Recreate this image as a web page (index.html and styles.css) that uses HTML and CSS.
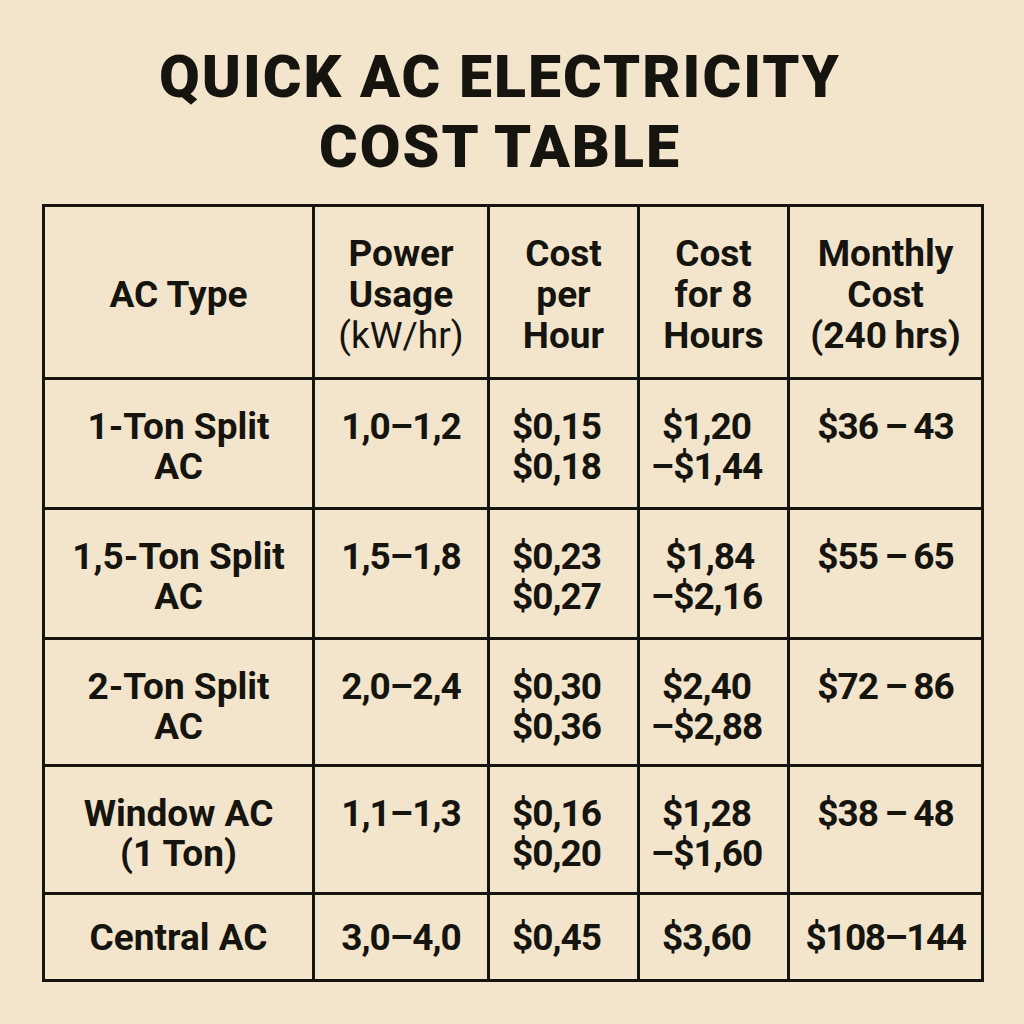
FILE: index.html
```html
<!DOCTYPE html>
<html lang="en">
<head>
<meta charset="utf-8">
<title>Quick AC Electricity Cost Table</title>
<link rel="stylesheet" href="styles.css">
</head>
<body>
<main class="page">
  <h1 class="title">QUICK AC ELECTRICITY<br>COST TABLE</h1>
  <div class="grid">
    <div class="cell head"><p class="txt">AC Type</p></div>
    <div class="cell head"><p class="txt">Power<br>Usage<br><span class="light">(kW/hr)</span></p></div>
    <div class="cell head"><p class="txt">Cost<br>per<br>Hour</p></div>
    <div class="cell head"><p class="txt">Cost<br>for 8<br>Hours</p></div>
    <div class="cell head"><p class="txt">Monthly<br>Cost<br>(240&#8201;hrs)</p></div>

    <div class="cell">1-Ton Split<br>AC</div>
    <div class="cell num">1,0–1,2</div>
    <div class="cell num left">$0,15<br>$0,18</div>
    <div class="cell num shift">$1,20<br>–$1,44</div>
    <div class="cell num">$36&#8201;–&#8201;43</div>

    <div class="cell">1,5-Ton Split<br>AC</div>
    <div class="cell num">1,5–1,8</div>
    <div class="cell num left">$0,23<br>$0,27</div>
    <div class="cell num shift">&#8201;$1,84<br>–$2,16</div>
    <div class="cell num">$55&#8201;–&#8201;65</div>

    <div class="cell">2-Ton Split<br>AC</div>
    <div class="cell num">2,0–2,4</div>
    <div class="cell num left">$0,30<br>$0,36</div>
    <div class="cell num shift">$2,40<br>–$2,88</div>
    <div class="cell num">$72&#8201;–&#8201;86</div>

    <div class="cell">Window AC<br>(1 Ton)</div>
    <div class="cell num">1,1–1,3</div>
    <div class="cell num left">$0,16<br>$0,20</div>
    <div class="cell num shift">$1,28<br>–$1,60</div>
    <div class="cell num">$38&#8201;–&#8201;48</div>

    <div class="cell last">Central AC</div>
    <div class="cell num last">3,0–4,0</div>
    <div class="cell num last left">$0,45</div>
    <div class="cell num last shift">$3,60</div>
    <div class="cell num last tight">$108–144</div>
  </div>
</main>
</body>
</html>
```

FILE: styles.css
```css
html, body {
  margin: 0;
  padding: 0;
  background: #f3e5cc;
}

body {
  width: 1024px;
  height: 1024px;
  overflow: hidden;
  font-family: Roboto, "Noto Sans", "Liberation Sans", sans-serif;
  color: #15140f;
}

.page {
  display: flex;
  flex-direction: column;
  align-items: flex-start;
  padding-top: 42px;
}

.title {
  align-self: center;
  margin: 0 0 22px 0;
  padding-right: 24px;
  font-size: 59px;
  line-height: 70px;
  font-weight: 900;
  letter-spacing: 2px;
  text-align: center;
}

.grid {
  margin-left: 42px;
  display: grid;
  grid-template-columns: 267px 172px 147px 147px 191px;
  grid-template-rows: 170px 127px 127px 124px 125px 84px;
  gap: 3px;
  padding: 3px;
  background: #15140f;
}

.cell {
  background: #f3e5cc;
  font-size: 37px;
  line-height: 40px;
  font-weight: 700;
  text-align: center;
  padding-top: 27px;
  box-sizing: border-box;
}

.num {
  letter-spacing: -1px;
}

.head {
  display: flex;
  align-items: center;
  justify-content: center;
  padding-top: 4px;
  line-height: 41px;
}

.txt {
  margin: 0;
}

.light {
  font-weight: 400;
}

.left {
  text-align: left;
  padding-left: 22px;
}

.shift {
  padding-right: 14px;
}

.last {
  display: flex;
  align-items: center;
  justify-content: center;
  padding-top: 2px;
}

.last.left {
  justify-content: flex-start;
}

.tight {
  letter-spacing: -1.5px;
}
```
